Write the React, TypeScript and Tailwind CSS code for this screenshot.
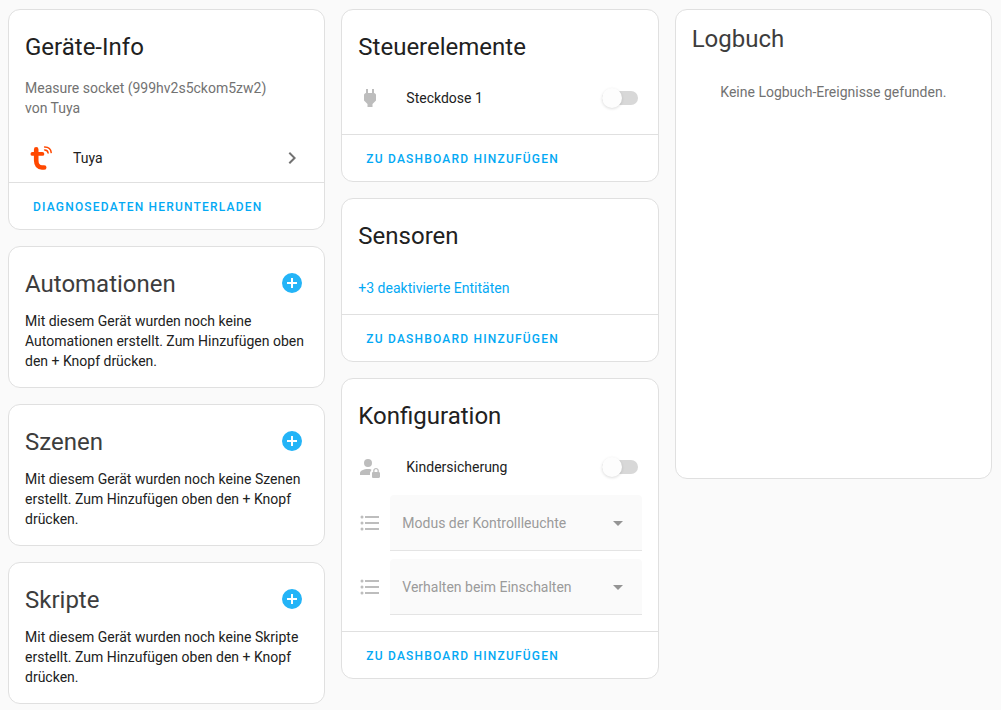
import type { ReactNode } from "react";

const ICONS = {
  chevronRight: "M8.59,16.58L13.17,12L8.59,7.41L10,6L16,12L10,18L8.59,16.58Z",
  plusCircle:
    "M17,13H13V17H11V13H7V11H11V7H13V11H17M12,2A10,10 0 0,0 2,12A10,10 0 0,0 12,22A10,10 0 0,0 22,12A10,10 0 0,0 12,2Z",
  powerPlug: "M16,7V3H14V7H10V3H8V7H8C7,7 6,8 6,9V14.5L9.5,18V21H14.5V18L18,14.5V9C18,8 17,7 16,7Z",
  accountLock:
    "M6,8A4,4 0 0,1 10,4A4,4 0 0,1 14,8A4,4 0 0,1 10,12A4,4 0 0,1 6,8M12,18.2C12,17.24 12.5,16.34 13.2,15.74V15.5C13.2,15.11 13.27,14.74 13.38,14.38C12.35,14.14 11.21,14 10,14C5.58,14 2,15.79 2,18V20H12V18.2M22,18.3V21.8C22,22.4 21.4,23 20.7,23H15.2C14.6,23 14,22.4 14,21.7V18.2C14,17.6 14.6,17 15.2,17V15.5C15.2,14.1 16.6,13 18,13C19.4,13 20.8,14.1 20.8,15.5V17C21.4,17 22,17.6 22,18.3M19.5,15.5C19.5,14.7 18.8,14.2 18,14.2C17.2,14.2 16.5,14.7 16.5,15.5V17H19.5V15.5Z",
  list:
    "M7,5H21V7H7V5M7,13V11H21V13H7M4,4.5A1.5,1.5 0 0,1 5.5,6A1.5,1.5 0 0,1 4,7.5A1.5,1.5 0 0,1 2.5,6A1.5,1.5 0 0,1 4,4.5M4,10.5A1.5,1.5 0 0,1 5.5,12A1.5,1.5 0 0,1 4,13.5A1.5,1.5 0 0,1 2.5,12A1.5,1.5 0 0,1 4,10.5M7,19V17H21V19H7M4,16.5A1.5,1.5 0 0,1 5.5,18A1.5,1.5 0 0,1 4,19.5A1.5,1.5 0 0,1 2.5,18A1.5,1.5 0 0,1 4,16.5Z",
  menuDown: "M7,10L12,15L17,10H7Z",
};

function Icon({ path, className }: { path: string; className: string }) {
  return (
    <svg viewBox="0 0 24 24" className={`h-6 w-6 shrink-0 ${className}`} fill="currentColor" aria-hidden="true">
      <path d={path} />
    </svg>
  );
}

function TuyaLogo() {
  return (
    <svg viewBox="0 0 24 24" className="h-6 w-6 shrink-0" fill="none" stroke="#ff4800" strokeLinecap="round" aria-hidden="true">
      <path d="M7.2 3.4V14.5Q7.4 21.4 13 21.5H15.2" strokeWidth="4.6" />
      <path d="M3.4 7.9H13.4" strokeWidth="3.8" />
      <path d="M15.6 0.9C19.6 1 22 3.4 22.2 6.6" strokeWidth="1.5" />
      <path d="M15.6 3.9C17.6 4 19 5.2 19.1 7" strokeWidth="1.5" />
    </svg>
  );
}

function Card({ children }: { children: ReactNode }) {
  return <section className="rounded-xl border border-[#e0e0e0] bg-white">{children}</section>;
}

function CardTitle({ children }: { children: ReactNode }) {
  return <h1 className="px-4 pt-[13px] text-2xl leading-12">{children}</h1>;
}

function CardActions({ label }: { label: string }) {
  return (
    <div className="border-t border-[#e0e0e0] px-4 pt-[6px] pb-1">
      <button type="button" className="block h-9 cursor-pointer px-2 text-xs font-medium tracking-widest text-[#03a9f4] uppercase">
        {label}
      </button>
    </div>
  );
}

function RelatedCard({ title, text }: { title: string; text: string }) {
  return (
    <Card>
      <div className="flex items-start justify-between pt-[13px] pr-5 pl-4">
        <h1 className="text-2xl leading-12 text-[#3d3d3d]">{title}</h1>
        <button type="button" aria-label={`${title} hinzufügen`} className="mt-[11px] cursor-pointer">
          <Icon path={ICONS.plusCircle} className="text-[#24b4f7]" />
        </button>
      </div>
      <p className="px-4 pt-[3px] pb-4">{text}</p>
    </Card>
  );
}

function ToggleRow({ id, icon, label }: { id: string; icon: string; label: string }) {
  return (
    <div className="flex h-10 items-center pr-1">
      <Icon path={icon} className="text-[#bdbdbd]" />
      <label htmlFor={id} className="ml-6 flex-1">
        {label}
      </label>
      <input
        id={id}
        type="checkbox"
        role="switch"
        className="h-[14px] w-9 cursor-pointer appearance-none rounded-full bg-[#d8d8d8] before:block before:size-5 before:-translate-y-[3px] before:rounded-full before:bg-[#fdfdfd] before:shadow-[0_1px_3px_rgba(0,0,0,0.14)]"
      />
    </div>
  );
}

function SelectRow({ label }: { label: string }) {
  return (
    <div className="flex items-center gap-2">
      <Icon path={ICONS.list} className="text-[#bdbdbd]" />
      <div className="relative flex-1">
        <select
          disabled
          aria-label={label}
          className="block h-14 w-full appearance-none rounded-t border-b border-[#e4e4e4] bg-[#fafafa] px-3 text-[#9b9b9b] opacity-100"
        >
          <option>{label}</option>
        </select>
        <Icon path={ICONS.menuDown} className="pointer-events-none absolute top-4 right-3 text-[#949494]" />
      </div>
    </div>
  );
}

export default function App() {
  return (
    <main className="grid min-h-screen grid-cols-3 items-start gap-4 bg-[#fafafa] pt-[9px] pr-[9px] pb-1 pl-2 font-[Roboto,'Noto_Sans',sans-serif] text-sm leading-5 text-[#212121]">
      <div className="flex flex-col gap-4">
        <Card>
          <CardTitle>Geräte-Info</CardTitle>
          <p className="px-4 pt-[7px] pb-4 text-[#727272]">
            Measure socket (999hv2s5ckom5zw2)
            <br />
            von Tuya
          </p>
          <a href="#tuya" className="flex h-12 items-center px-5">
            <TuyaLogo />
            <span className="ml-5 flex-1">Tuya</span>
            <Icon path={ICONS.chevronRight} className="text-[#727272]" />
          </a>
          <CardActions label="Diagnosedaten herunterladen" />
        </Card>
        <RelatedCard
          title="Automationen"
          text="Mit diesem Gerät wurden noch keine Automationen erstellt. Zum Hinzufügen oben den + Knopf drücken."
        />
        <RelatedCard
          title="Szenen"
          text="Mit diesem Gerät wurden noch keine Szenen erstellt. Zum Hinzufügen oben den + Knopf drücken."
        />
        <RelatedCard
          title="Skripte"
          text="Mit diesem Gerät wurden noch keine Skripte erstellt. Zum Hinzufügen oben den + Knopf drücken."
        />
      </div>

      <div className="flex flex-col gap-4">
        <Card>
          <CardTitle>Steuerelemente</CardTitle>
          <div className="px-4 pt-[7px] pb-4">
            <ToggleRow id="steckdose" icon={ICONS.powerPlug} label="Steckdose 1" />
          </div>
          <CardActions label="Zu Dashboard hinzufügen" />
        </Card>
        <Card>
          <CardTitle>Sensoren</CardTitle>
          <div className="px-4 pt-[18px] pb-4">
            <button type="button" className="block cursor-pointer text-[#03a9f4]">
              +3 deaktivierte Entitäten
            </button>
          </div>
          <CardActions label="Zu Dashboard hinzufügen" />
        </Card>
        <Card>
          <CardTitle>Konfiguration</CardTitle>
          <div className="flex flex-col gap-2 px-4 pt-[7px] pb-4">
            <ToggleRow id="kindersicherung" icon={ICONS.accountLock} label="Kindersicherung" />
            <SelectRow label="Modus der Kontrollleuchte" />
            <SelectRow label="Verhalten beim Einschalten" />
          </div>
          <CardActions label="Zu Dashboard hinzufügen" />
        </Card>
      </div>

      <Card>
        <h1 className="px-4 pt-[5px] pb-[15px] text-2xl leading-12 text-[#3d3d3d]">Logbuch</h1>
        <div className="h-[400px] overflow-y-auto px-4 pt-1 text-center text-[#727272]">
          Keine Logbuch-Ereignisse gefunden.
        </div>
      </Card>
    </main>
  );
}
